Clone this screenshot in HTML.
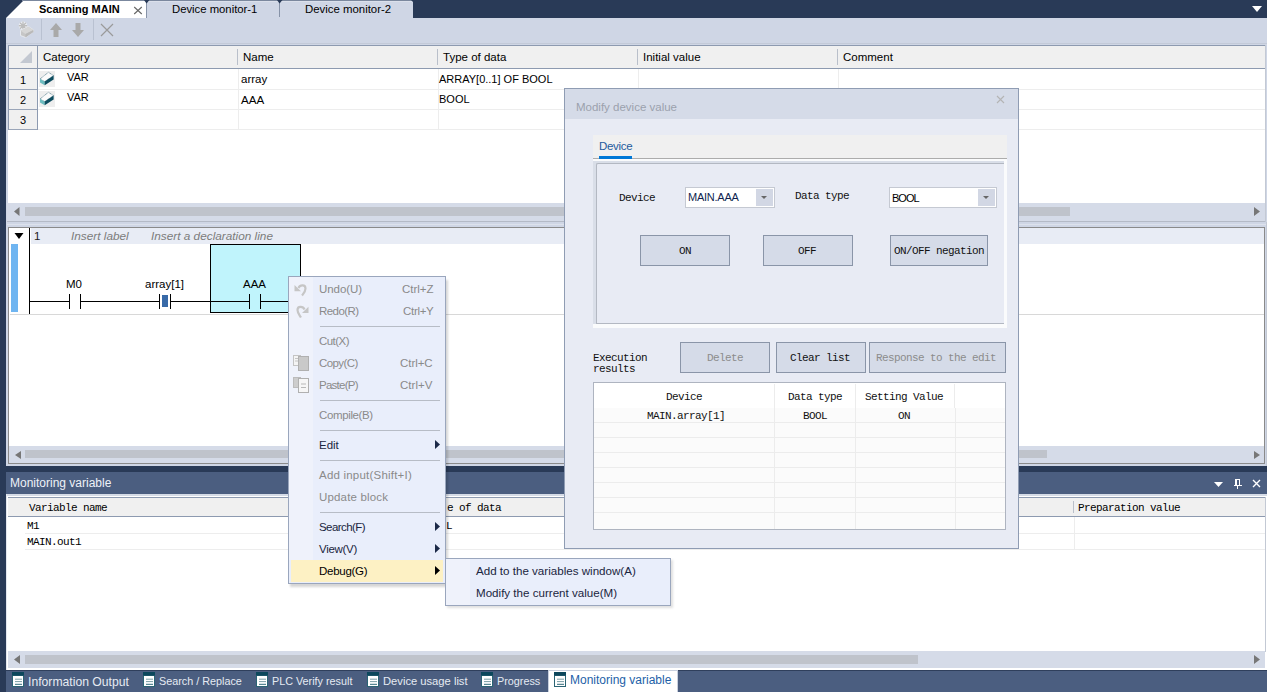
<!DOCTYPE html>
<html><head><meta charset="utf-8">
<style>
*{margin:0;padding:0;box-sizing:border-box}
html,body{width:1267px;height:692px;overflow:hidden}
body{position:relative;background:#293a57;font-family:"Liberation Sans",sans-serif;font-size:12px;color:#000}
.a{position:absolute}
.t{position:absolute;white-space:nowrap;line-height:1}
.mono{font-family:"Liberation Mono",monospace;letter-spacing:-0.6px;font-size:11px}
.hl{position:absolute;height:1px}
.vl{position:absolute;width:1px}
</style></head><body>

<!-- ============ TAB STRIP ============ -->
<svg class="a" style="left:0;top:0" width="420" height="19">
  <rect x="22" y="0" width="391" height="1" fill="#7b889e"/>
  <polygon points="6,18 23,1 147,1 147,18" fill="#ffffff"/>
  <rect x="147" y="1" width="266" height="17" fill="#cfd6e5"/>
  <rect x="148" y="1" width="264" height="1" fill="#dbe0eb"/>
  <rect x="146" y="2" width="1" height="16" fill="#8793a8"/>
  <rect x="279" y="2" width="1" height="15" fill="#8793a8"/>
  <polygon points="144,0 149.5,0 146.5,3.5" fill="#293a57"/>
  <polygon points="277,0 282.5,0 279.5,3.5" fill="#293a57"/>
  <polygon points="411,0 413,0 413,2" fill="#293a57"/>
</svg>
<div class="t" style="left:39px;top:4px;font-weight:bold;font-size:11px">Scanning MAIN</div>
<svg class="a" style="left:133px;top:6px" width="10" height="9"><path d="M1.2 1 L8.8 8 M8.8 1 L1.2 8" stroke="#666" stroke-width="1.1"/></svg>
<div class="t" style="left:172px;top:4px;font-size:11.3px">Device monitor-1</div>
<div class="t" style="left:305px;top:4px;font-size:11.4px">Device monitor-2</div>
<svg class="a" style="left:1252px;top:6px" width="11" height="7"><polygon points="0,0 10,0 5,6" fill="#fff"/></svg>

<!-- ============ TOOLBAR ============ -->
<div class="a" style="left:6px;top:18px;width:1261px;height:448px;background:#cfd6e5"></div>
<div class="hl" style="left:6px;top:43px;width:1261px;background:#c3cad8"></div>
<div class="vl" style="left:41px;top:19px;height:21px;background:#b9c1d1"></div>
<div class="vl" style="left:93px;top:19px;height:21px;background:#b9c1d1"></div>
<!-- new icon -->
<svg class="a" style="left:17px;top:20px" width="20" height="20">
  <path d="M6 1.5 V10 M1.8 5.8 H10.2 M3 2.8 L9 8.8 M9 2.8 L3 8.8" stroke="#f4f6fa" stroke-width="2.6"/>
  <path d="M6 1.5 V10 M1.8 5.8 H10.2 M3 2.8 L9 8.8 M9 2.8 L3 8.8" stroke="#bdbdbd" stroke-width="1.4"/>
  <path d="M3.5 10.5 L11.5 6.5 L16.5 10 L16.5 11.5 L8.5 17.5 L3.5 15.5 Z" fill="#c6c6c6" stroke="#eef0f5" stroke-width="0.8"/>
  <path d="M3.5 10.5 L11.5 6.5 L16.5 10 L8.5 14 Z" fill="#d6d6d6"/>
  <path d="M8.5 14 L16.5 10 L16.5 12 L8.5 17.5 Z" fill="#b9b9b9"/>
</svg>
<!-- up arrow -->
<svg class="a" style="left:49px;top:22px" width="14" height="16"><path d="M7 1 L13 8 L9.5 8 L9.5 15 L4.5 15 L4.5 8 L1 8 Z" fill="#a9a9a9"/></svg>
<svg class="a" style="left:71px;top:22px" width="14" height="16"><path d="M4.5 1 L9.5 1 L9.5 8 L13 8 L7 15 L1 8 L4.5 8 Z" fill="#a9a9a9"/></svg>
<svg class="a" style="left:100px;top:23px" width="14" height="14"><path d="M1 1 L13 13 M13 1 L1 13" stroke="#9a9a9a" stroke-width="1.2"/></svg>

<!-- ============ TOP GRID ============ -->
<div class="a" style="left:8px;top:45px;width:1257px;height:158px;background:#fff"></div>
<div class="hl" style="left:8px;top:45px;width:1257px;background:#8d9ab0"></div>
<div class="vl" style="left:8px;top:45px;height:85px;background:#8d9ab0"></div>
<div class="a" style="left:9px;top:46px;width:1256px;height:22px;background:#f0f0f0"></div>
<div class="hl" style="left:9px;top:68px;width:1256px;background:#8d9ab0"></div>
<!-- row header col -->
<div class="a" style="left:9px;top:69px;width:28px;height:61px;background:#f0f0f0"></div>
<div class="vl" style="left:37px;top:46px;height:84px;background:#8d9ab0"></div>
<div class="hl" style="left:9px;top:89px;width:28px;background:#9aa5b8"></div>
<div class="hl" style="left:9px;top:109px;width:28px;background:#9aa5b8"></div>
<div class="hl" style="left:9px;top:129px;width:28px;background:#9aa5b8"></div>
<svg class="a" style="left:19px;top:50px" width="14" height="14"><polygon points="1,13 13,1 13,13" fill="#c3c8d1"/></svg>
<!-- body row lines -->
<div class="hl" style="left:38px;top:89px;width:1227px;background:#ededed"></div>
<div class="hl" style="left:38px;top:109px;width:1227px;background:#ededed"></div>
<div class="hl" style="left:38px;top:129px;width:1227px;background:#ededed"></div>
<!-- col dividers -->
<div class="vl" style="left:237px;top:49px;height:16px;background:#b9bfca"></div>
<div class="vl" style="left:437px;top:49px;height:16px;background:#b9bfca"></div>
<div class="vl" style="left:637px;top:49px;height:16px;background:#b9bfca"></div>
<div class="vl" style="left:837px;top:49px;height:16px;background:#b9bfca"></div>
<div class="vl" style="left:238px;top:69px;height:60px;background:#ededed"></div>
<div class="vl" style="left:438px;top:69px;height:60px;background:#ededed"></div>
<div class="vl" style="left:638px;top:69px;height:60px;background:#ededed"></div>
<div class="vl" style="left:838px;top:69px;height:60px;background:#ededed"></div>
<!-- header texts -->
<div class="t" style="left:43px;top:52px;font-size:11.5px">Category</div>
<div class="t" style="left:243px;top:52px;font-size:11.5px">Name</div>
<div class="t" style="left:443px;top:52px;font-size:11.5px">Type of data</div>
<div class="t" style="left:643px;top:52px;font-size:11.5px">Initial value</div>
<div class="t" style="left:843px;top:52px;font-size:11.5px">Comment</div>
<!-- row nums -->
<div class="t" style="left:20px;top:75px;font-size:11px">1</div>
<div class="t" style="left:20px;top:95px;font-size:11px">2</div>
<div class="t" style="left:20px;top:115px;font-size:11px">3</div>
<!-- VAR icons -->
<svg class="a" style="left:39px;top:71px" width="16" height="16"><rect width="16" height="16" fill="#eeeeee"/><path d="M1 8 L9.4 1.3 L14.6 4.6 L5.7 10.6 Z" fill="#fbfbfb" stroke="#3f6f80" stroke-width="0.7" stroke-dasharray="1 0.6"/><path d="M1 8 L5.7 10.6 L5.7 14.3 L1 11.6 Z" fill="#6cbcbf"/><path d="M5.7 10.6 L14.6 4.6 L14.6 8.6 L5.7 14.3 Z" fill="#0e4d60"/></svg>
<svg class="a" style="left:39px;top:91px" width="16" height="16"><rect width="16" height="16" fill="#eeeeee"/><path d="M1 8 L9.4 1.3 L14.6 4.6 L5.7 10.6 Z" fill="#fbfbfb" stroke="#3f6f80" stroke-width="0.7" stroke-dasharray="1 0.6"/><path d="M1 8 L5.7 10.6 L5.7 14.3 L1 11.6 Z" fill="#6cbcbf"/><path d="M5.7 10.6 L14.6 4.6 L14.6 8.6 L5.7 14.3 Z" fill="#0e4d60"/></svg>
<div class="t" style="left:67px;top:72px;font-size:11px">VAR</div>
<div class="t" style="left:67px;top:92px;font-size:11px">VAR</div>
<div class="t" style="left:241px;top:74px;font-size:11.5px">array</div>
<div class="t" style="left:241px;top:94px;font-size:11.6px">AAA</div>
<div class="t" style="left:439px;top:74px;font-size:11px">ARRAY[0..1] OF BOOL</div>
<div class="t" style="left:439px;top:94px;font-size:11px">BOOL</div>

<!-- top scrollbar -->
<div class="a" style="left:7px;top:203px;width:1258px;height:18px;background:#d5dbe8"></div>
<div class="hl" style="left:7px;top:221px;width:1259px;background:#b4bac6"></div>
<div class="hl" style="left:7px;top:224px;width:1259px;background:#dde2ec"></div>
<div class="vl" style="left:1265px;top:45px;height:177px;background:#c3c9d4"></div>
<div class="a" style="left:25px;top:207px;width:1045px;height:9px;background:#bfc3cb"></div>
<svg class="a" style="left:14px;top:207px" width="6" height="9"><polygon points="5.5,0 5.5,9 0,4.5" fill="#777"/></svg>
<svg class="a" style="left:1254px;top:207px" width="7" height="10"><polygon points="0,0 0,9 6,4.5" fill="#777"/></svg>

<div class="vl" style="left:1266px;top:222px;height:244px;background:#c2c8d3"></div>
<!-- ============ LADDER ============ -->
<div class="a" style="left:8px;top:227px;width:1257px;height:237px;background:#fff;border:1px solid #8a8a8a"></div>
<div class="a" style="left:31px;top:228px;width:1233px;height:16px;background:#e8ecf5"></div>
<div class="vl" style="left:29px;top:228px;height:87px;background:#000"></div>
<svg class="a" style="left:14px;top:233px" width="10" height="7"><polygon points="0.5,0 9.5,0 5,6" fill="#000"/></svg>
<div class="a" style="left:11px;top:244px;width:7px;height:68px;background:#6fb5f1"></div>
<div class="t" style="left:34px;top:231px;font-size:11.5px;color:#222">1</div>
<div class="t" style="left:71px;top:231px;font-size:11.8px;font-style:italic;color:#7c7c7c">Insert label</div>
<div class="t" style="left:151px;top:231px;font-size:11.8px;font-style:italic;color:#7c7c7c">Insert a declaration line</div>
<div class="hl" style="left:10px;top:314px;width:1254px;background:#d8d8d8"></div>
<!-- cyan box -->
<div class="a" style="left:210px;top:244px;width:91px;height:69px;background:#c0f4fc;border:1px solid #000"></div>
<!-- rung -->
<div class="hl" style="left:30px;top:301px;width:260px;background:#000"></div>
<svg class="a" style="left:60px;top:290px" width="250" height="22">
  <rect x="9" y="4" width="1" height="15" fill="#000"/><rect x="20" y="4" width="1" height="15" fill="#000"/>
  <rect x="10" y="10" width="10" height="3" fill="#fff"/>
  <rect x="99" y="4" width="1" height="15" fill="#000"/><rect x="110" y="4" width="1" height="15" fill="#000"/>
  <rect x="100" y="10" width="10" height="3" fill="#fff"/>
  <rect x="102" y="5" width="6" height="12" fill="#386aa8"/>
  <rect x="189" y="4" width="1" height="15" fill="#000"/><rect x="200" y="4" width="1" height="15" fill="#000"/>
  <rect x="190" y="10" width="10" height="3" fill="#c0f4fc"/>
</svg>
<div class="t" style="left:66px;top:279px;font-size:11.5px">M0</div>
<div class="t" style="left:145px;top:279px;font-size:11.5px">array[1]</div>
<div class="t" style="left:243px;top:279px;font-size:11.5px">AAA</div>

<!-- bottom ladder scrollbar -->
<div class="a" style="left:9px;top:446px;width:1255px;height:17px;background:#d5dbe8"></div>
<div class="a" style="left:25px;top:450px;width:1022px;height:8px;background:#bfc3cb"></div>
<svg class="a" style="left:15px;top:451px" width="6" height="8"><polygon points="6,0 6,8 0,4" fill="#777"/></svg>
<svg class="a" style="left:1254px;top:451px" width="6" height="8"><polygon points="0,0 0,8 6,4" fill="#777"/></svg>

<!-- navy strip -->
<div class="a" style="left:6px;top:466px;width:1261px;height:6px;background:#293a57"></div>

<!-- ============ MONITORING VARIABLE ============ -->
<div class="a" style="left:6px;top:472px;width:1261px;height:22px;background:#4b5e80"></div>
<div class="t" style="left:10px;top:477px;font-size:12px;color:#eef2f8">Monitoring variable</div>
<svg class="a" style="left:1214px;top:482px" width="9" height="6"><polygon points="0,0 9,0 4.5,5" fill="#fff"/></svg>
<svg class="a" style="left:1234px;top:479px" width="8" height="10"><path d="M1 0 H6 V6 H1 Z" fill="#fff"/><rect x="3" y="1" width="2" height="5" fill="#4b5e80"/><rect x="0" y="6" width="8" height="1" fill="#fff"/><rect x="3" y="7" width="1" height="3" fill="#fff"/></svg>
<svg class="a" style="left:1252px;top:479px" width="9" height="9"><path d="M1 1 L8 8 M8 1 L1 8" stroke="#fff" stroke-width="1.4"/></svg>
<div class="a" style="left:6px;top:494px;width:1261px;height:176px;background:#fff"></div>
<div class="a" style="left:6px;top:494px;width:1261px;height:2px;background:#d5dbe6"></div>
<div class="vl" style="left:6px;top:494px;height:176px;background:#e3e7ef"></div>
<div class="a" style="left:8px;top:497px;width:1258px;height:19px;background:#f0f0f0;border-top:1px solid #8d9ab0"></div>
<div class="hl" style="left:8px;top:516px;width:1258px;background:#8d9ab0"></div>
<div class="vl" style="left:1265px;top:497px;height:155px;background:#c3c9d4"></div>
<div class="hl" style="left:25px;top:533px;width:1240px;background:#ededed"></div>
<div class="hl" style="left:25px;top:549px;width:1240px;background:#ededed"></div>
<div class="vl" style="left:1073px;top:501px;height:12px;background:#b9bfca"></div>
<div class="vl" style="left:1074px;top:517px;height:33px;background:#ededed"></div>
<div class="t mono" style="left:29px;top:503px">Variable name</div>
<div class="t mono" style="left:447px;top:503px">e of data</div>
<div class="t mono" style="left:1078px;top:503px">Preparation value</div>
<div class="t mono" style="left:27px;top:521px">M1</div>
<div class="t mono" style="left:27px;top:537px">MAIN.out1</div>
<div class="t mono" style="left:446px;top:521px">L</div>

<!-- bottom scrollbar -->
<div class="a" style="left:8px;top:651px;width:1257px;height:17px;background:#d5dbe8"></div>
<div class="a" style="left:25px;top:655px;width:893px;height:9px;background:#bfc3cb"></div>
<svg class="a" style="left:14px;top:655px" width="7" height="10"><polygon points="6,0 6,9 0,4.5" fill="#777"/></svg>
<svg class="a" style="left:1254px;top:655px" width="7" height="10"><polygon points="0,0 0,9 6,4.5" fill="#777"/></svg>

<!-- ============ BOTTOM TABS ============ -->
<div class="a" style="left:6px;top:670px;width:1261px;height:22px;background:#4b5e80;border-top:1px solid #2f3f5c"></div>
<div class="a" style="left:548px;top:670px;width:130px;height:22px;background:#fff;border:1px solid #c8d0de;border-bottom:none"></div>
<svg width="0" height="0" style="position:absolute">
  <defs>
    <g id="doc"><rect x="0" y="0" width="12" height="15" fill="#2a6474"/><rect x="0" y="0" width="12" height="3.5" fill="#0c475c"/><rect x="1" y="4" width="10" height="10" fill="#fff"/><path d="M3 7.2 H10 M3 9.6 H10" stroke="#7a9ea6" stroke-width="1"/><path d="M3 12.3 H10" stroke="#2f6878" stroke-width="1"/></g>
  </defs>
</svg>
<svg class="a" style="left:12px;top:672px" width="12" height="16"><use href="#doc"/></svg>
<div class="t" style="left:28px;top:676px;font-size:12.2px;color:#e6ebf3">Information Output</div>
<svg class="a" style="left:143px;top:672px" width="12" height="16"><use href="#doc"/></svg>
<div class="t" style="left:159px;top:676px;font-size:10.8px;color:#e6ebf3">Search / Replace</div>
<svg class="a" style="left:256px;top:672px" width="12" height="16"><use href="#doc"/></svg>
<div class="t" style="left:272px;top:676px;font-size:10.8px;color:#e6ebf3">PLC Verify result</div>
<svg class="a" style="left:367px;top:672px" width="12" height="16"><use href="#doc"/></svg>
<div class="t" style="left:383px;top:676px;font-size:11.2px;color:#e6ebf3">Device usage list</div>
<svg class="a" style="left:481px;top:672px" width="12" height="16"><use href="#doc"/></svg>
<div class="t" style="left:497px;top:676px;font-size:10.8px;color:#e6ebf3">Progress</div>
<svg class="a" style="left:554px;top:672px" width="12" height="16"><use href="#doc"/></svg>
<div class="t" style="left:570px;top:674px;font-size:12px;color:#1d5fa8">Monitoring variable</div>

<!-- ============ DIALOG ============ -->
<div class="a" style="left:564px;top:88px;width:455px;height:461px;background:#e8ebf4;border:1px solid #8f9cb3"></div>
<div class="a" style="left:565px;top:89px;width:453px;height:30px;background:#d5dbe8"></div>
<div class="t" style="left:576px;top:102px;font-size:11.5px;color:#9ba1ad">Modify device value</div>
<svg class="a" style="left:996px;top:95px" width="9" height="9"><path d="M1 1 L8 8 M8 1 L1 8" stroke="#b4b4b4" stroke-width="1.1"/></svg>
<div class="a" style="left:593px;top:135px;width:414px;height:193px;background:#f0f0f0"></div>
<div class="hl" style="left:593px;top:158px;width:414px;background:#acacac"></div>
<div class="a" style="left:599px;top:156px;width:33px;height:3px;background:#0078d7"></div>
<div class="t" style="left:599px;top:141px;font-size:11.5px;letter-spacing:-0.3px;color:#1e5b9e">Device</div>
<div class="a" style="left:593px;top:159px;width:414px;height:169px;background:#fafbfc"></div>
<div class="a" style="left:593px;top:161px;width:411px;height:163px;background:#d9dee8"></div>
<div class="a" style="left:596px;top:163px;width:408px;height:161px;background:#e8ebf4;border-top:1px solid #b3b8c2;border-left:1px solid #b3b8c2;border-bottom:1px solid #b3b8c2;border-top-left-radius:2px"></div>
<div class="t mono" style="left:619px;top:193px;color:#111">Device</div>
<div class="t mono" style="left:795px;top:191px;color:#111">Data type</div>
<div class="a" style="left:685px;top:187px;width:90px;height:21px;background:#fff;border:1px solid #c5c9d2"></div>
<div class="a" style="left:756px;top:189px;width:17px;height:17px;background:#d2d7e4"></div>
<svg class="a" style="left:761px;top:196px" width="7" height="4"><polygon points="0,0 6,0 3,3" fill="#666"/></svg>
<div class="t" style="left:688px;top:192px;font-size:11px;letter-spacing:-0.25px;color:#0f1f4f">MAIN.AAA</div>
<div class="a" style="left:889px;top:187px;width:108px;height:21px;background:#fff;border:1px solid #c5c9d2"></div>
<div class="a" style="left:978px;top:189px;width:17px;height:17px;background:#d2d7e4"></div>
<svg class="a" style="left:983px;top:196px" width="7" height="4"><polygon points="0,0 6,0 3,3" fill="#666"/></svg>
<div class="t" style="left:892px;top:193px;font-size:11px;letter-spacing:-1px;color:#000">BOOL</div>
<div class="a" style="left:640px;top:235px;width:90px;height:31px;background:#d5dbe8;border:1px solid #8a95a8"></div>
<div class="a" style="left:763px;top:235px;width:90px;height:31px;background:#d5dbe8;border:1px solid #8a95a8"></div>
<div class="a" style="left:890px;top:235px;width:98px;height:31px;background:#d5dbe8;border:1px solid #8a95a8"></div>
<div class="t mono" style="left:679px;top:246px;color:#111">ON</div>
<div class="t mono" style="left:798px;top:246px;color:#111">OFF</div>
<div class="t mono" style="left:894px;top:246px;color:#111">ON/OFF negation</div>
<div class="t mono" style="left:593px;top:353px;color:#111;line-height:11px">Execution<br>results</div>
<div class="a" style="left:680px;top:342px;width:90px;height:31px;background:#d5dbe8;border:1px solid #8a95a8"></div>
<div class="a" style="left:776px;top:342px;width:90px;height:31px;background:#d5dbe8;border:1px solid #8a95a8"></div>
<div class="a" style="left:869px;top:342px;width:137px;height:31px;background:#d5dbe8;border:1px solid #8a95a8"></div>
<div class="t mono" style="left:707px;top:353px;color:#8c8c8c">Delete</div>
<div class="t mono" style="left:790px;top:353px;color:#111">Clear list</div>
<div class="t mono" style="left:876px;top:353px;color:#8c8c8c">Response to the edit</div>
<!-- results table -->
<div class="a" style="left:593px;top:382px;width:413px;height:148px;background:#fff;border:1px solid #aeb4c0"></div>
<div class="a" style="left:594px;top:408px;width:411px;height:121px;background:#fbfbfb"></div>
<div class="hl" style="left:594px;top:422px;width:411px;background:#ececec"></div>
<div class="hl" style="left:594px;top:437px;width:411px;background:#ececec"></div>
<div class="hl" style="left:594px;top:452px;width:411px;background:#ececec"></div>
<div class="hl" style="left:594px;top:467px;width:411px;background:#ececec"></div>
<div class="hl" style="left:594px;top:482px;width:411px;background:#ececec"></div>
<div class="hl" style="left:594px;top:497px;width:411px;background:#ececec"></div>
<div class="hl" style="left:594px;top:512px;width:411px;background:#ececec"></div>
<div class="vl" style="left:774px;top:384px;height:145px;background:#ececec"></div>
<div class="vl" style="left:855px;top:384px;height:145px;background:#ececec"></div>
<div class="vl" style="left:954px;top:384px;height:24px;background:#ececec"></div>
<div class="vl" style="left:955px;top:408px;height:121px;background:#ececec"></div>
<div class="t mono" style="left:666px;top:392px;color:#111">Device</div>
<div class="t mono" style="left:788px;top:392px;color:#111">Data type</div>
<div class="t mono" style="left:865px;top:392px;color:#111">Setting Value</div>
<div class="t mono" style="left:647px;top:411px;color:#111">MAIN.array[1]</div>
<div class="t mono" style="left:803px;top:411px;color:#111">BOOL</div>
<div class="t mono" style="left:898px;top:411px;color:#111">ON</div>

<!-- ============ CONTEXT MENU ============ -->
<div class="a" style="left:290px;top:280px;width:158px;height:307px;background:rgba(0,0,0,0.16);filter:blur(1.2px)"></div>
<div class="a" style="left:288px;top:276px;width:158px;height:308px;background:#e9eefb;border:1px solid #9aa6bd"></div>
<div class="a" style="left:289px;top:277px;width:24px;height:283px;background:#eff2fb"></div>
<div class="a" style="left:291px;top:560px;width:152px;height:22px;background:#fdf1c4"></div>
<div class="hl" style="left:320px;top:326px;width:120px;background:#b7bcc6"></div>
<div class="hl" style="left:320px;top:400px;width:120px;background:#b7bcc6"></div>
<div class="hl" style="left:320px;top:430px;width:120px;background:#b7bcc6"></div>
<div class="hl" style="left:320px;top:460px;width:120px;background:#b7bcc6"></div>
<div class="hl" style="left:320px;top:512px;width:120px;background:#b7bcc6"></div>
<div class="t" style="left:319px;top:284px;font-size:11.5px;letter-spacing:-0.06px;color:#8a8a8a">Undo(U)</div>
<div class="t" style="left:402px;top:284px;font-size:11.5px;letter-spacing:-0.02px;color:#8a8a8a">Ctrl+Z</div>
<div class="t" style="left:319px;top:306px;font-size:11.5px;letter-spacing:-0.56px;color:#8a8a8a">Redo(R)</div>
<div class="t" style="left:403px;top:306px;font-size:11.5px;letter-spacing:-0.30px;color:#8a8a8a">Ctrl+Y</div>
<div class="t" style="left:319px;top:336px;font-size:11.5px;letter-spacing:-0.54px;color:#8a8a8a">Cut(X)</div>
<div class="t" style="left:319px;top:358px;font-size:11.5px;letter-spacing:-0.59px;color:#8a8a8a">Copy(C)</div>
<div class="t" style="left:400px;top:358px;font-size:11.5px;letter-spacing:-0.05px;color:#8a8a8a">Ctrl+C</div>
<div class="t" style="left:319px;top:380px;font-size:11.5px;letter-spacing:-0.75px;color:#8a8a8a">Paste(P)</div>
<div class="t" style="left:400px;top:380px;font-size:11.5px;letter-spacing:0.05px;color:#8a8a8a">Ctrl+V</div>
<div class="t" style="left:319px;top:410px;font-size:11.5px;letter-spacing:-0.37px;color:#8a8a8a">Compile(B)</div>
<div class="t" style="left:319px;top:440px;font-size:11.5px;letter-spacing:-0.03px;color:#1a2540">Edit</div>
<div class="t" style="left:319px;top:470px;font-size:11.5px;letter-spacing:0.21px;color:#8a8a8a">Add input(Shift+I)</div>
<div class="t" style="left:319px;top:492px;font-size:11.5px;letter-spacing:0.16px;color:#8a8a8a">Update block</div>
<div class="t" style="left:319px;top:522px;font-size:11.5px;letter-spacing:-0.57px;color:#1a2540">Search(F)</div>
<div class="t" style="left:319px;top:544px;font-size:11.5px;letter-spacing:-0.29px;color:#1a2540">View(V)</div>
<div class="t" style="left:319px;top:566px;font-size:11.5px;letter-spacing:-0.27px;color:#000">Debug(G)</div>
<svg class="a" style="left:435px;top:440px" width="6" height="10"><polygon points="0,0 5,4.5 0,9" fill="#1c2a48"/></svg>
<svg class="a" style="left:435px;top:522px" width="6" height="10"><polygon points="0,0 5,4.5 0,9" fill="#1c2a48"/></svg>
<svg class="a" style="left:435px;top:544px" width="6" height="10"><polygon points="0,0 5,4.5 0,9" fill="#1c2a48"/></svg>
<svg class="a" style="left:435px;top:566px" width="6" height="10"><polygon points="0,0 5,4.5 0,9" fill="#000"/></svg>
<!-- menu icons -->
<svg class="a" style="left:290px;top:278px" width="24" height="42">
  <path d="M8.5 10 C10 6.5, 15.5 6.5, 15.5 10.5 C15.5 13.5, 13.5 15.5, 12 17.5" stroke="#c6c6c6" stroke-width="2.2" fill="none"/>
  <polygon points="4.5,7 4.5,13.3 11,13.3" fill="#c6c6c6"/>
  <path d="M14.5 31.5 C13 28, 7.5 28, 7.5 32 C7.5 35, 9.5 37, 11 39.5" stroke="#c6c6c6" stroke-width="2.2" fill="none"/>
  <polygon points="18.5,28.8 18.5,35 12,35" fill="#c6c6c6"/>
</svg>
<svg class="a" style="left:289px;top:350px" width="24" height="46">
  <rect x="4.5" y="5.5" width="7" height="10" fill="#f4f4f4" stroke="#c4c4c4"/>
  <path d="M6 8.5 H10 M6 11 H10" stroke="#c4c4c4"/>
  <rect x="9.5" y="6.5" width="10" height="14" fill="#c9c9c9" stroke="#b0b0b0"/>
  <rect x="4.5" y="27.5" width="7" height="10" fill="#cdcdcd" stroke="#bcbcbc"/>
  <rect x="9.5" y="28.5" width="10" height="14" fill="#f6f6f6" stroke="#b0b0b0"/>
  <path d="M12 34 H17 M12 37.5 H17" stroke="#b8b8b8"/>
</svg>

<!-- submenu -->
<div class="a" style="left:447px;top:560px;width:226px;height:48px;background:rgba(0,0,0,0.12);filter:blur(1px)"></div>
<div class="a" style="left:445px;top:558px;width:226px;height:48px;background:#e9eefb;border:1px solid #9aa6bd"></div>
<div class="a" style="left:446px;top:559px;width:24px;height:46px;background:#eff2fb"></div>
<div class="t" style="left:476px;top:565px;font-size:11.6px;color:#1a2540">Add to the variables window(A)</div>
<div class="t" style="left:476px;top:587px;font-size:11.6px;color:#1a2540">Modify the current value(M)</div>
</body></html>
